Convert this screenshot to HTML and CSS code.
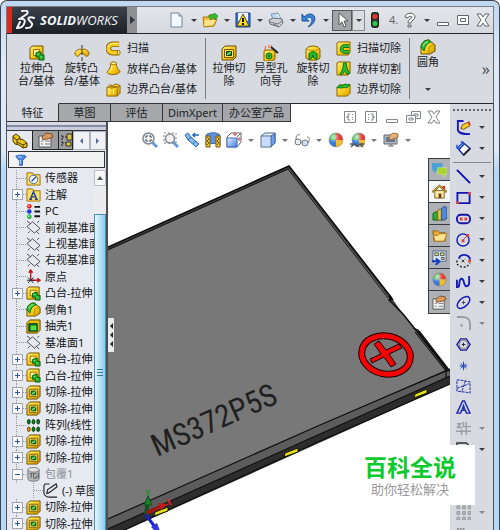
FILE: index.html
```html
<!DOCTYPE html>
<html lang="zh-CN">
<head>
<meta charset="utf-8">
<title>SolidWorks</title>
<meta name="viewport" content="width=device-width, initial-scale=1">
<link rel="stylesheet" href="styles.css">
</head>
<body>
<svg class="defs" aria-hidden="true">
  <defs>
    <linearGradient id="gold" x1="0" y1="0" x2="1" y2="1"><stop offset="0" stop-color="#fff07a"/><stop offset=".5" stop-color="#f8cd1c"/><stop offset="1" stop-color="#d39a00"/></linearGradient>
    <linearGradient id="sky" x1="0" y1="0" x2="1" y2="1"><stop offset="0" stop-color="#e9f3ff"/><stop offset="1" stop-color="#3d7be0"/></linearGradient>
    <radialGradient id="shine" cx=".35" cy=".3" r=".7"><stop offset="0" stop-color="#fff" stop-opacity=".7"/><stop offset=".6" stop-color="#fff" stop-opacity="0"/></radialGradient>
    <symbol id="boss" viewBox="0 0 16 16"><path d="M1 3 3 1h11v10l-2 3H1z" fill="url(#gold)" stroke="#7b5200"/><path d="M4.500 4.500h6v6h-6z" fill="#fff2a0" stroke="#9b7000"/><path d="M7 8l2-1h3v3h3v5h-5v-3H7z" fill="#23b52a" stroke="#075c12"/><path d="M8 9h2M11 12h2" fill="none" stroke="#7be06f"/></symbol>
    <symbol id="cut" viewBox="0 0 16 16"><path d="M1 4 4 1h11v11l-3 3H1z" fill="url(#gold)" stroke="#6c4a00"/><path d="M3.500 4.500h9v8h-9z" fill="#ffe45c" stroke="#7b5800"/><path d="M5.500 6.500h5v4h-5z" fill="#1aa52b" stroke="#073f0e"/><path d="M6 10l4-3" stroke="#bdf6b0"/></symbol>
    <symbol id="revolve" viewBox="0 0 16 16"><path d="M8 0v3M8 12v4" stroke="#333"/><path d="M1 9c0-4 4-5 7-5s7 1 7 5c-1 3-4 3-5 0-1-1-3-1-4 0-1 3-4 3-5 0z" fill="url(#gold)" stroke="#8e6200"/><path d="M8 4v6" stroke="#333"/></symbol>
    <symbol id="sweep" viewBox="0 0 16 16"><path d="M14 3.500H7a4.500 4.500 0 0 0 0 9h6" fill="none" stroke="#8e6200" stroke-width="6"/><path d="M14 3.500H7a4.500 4.500 0 0 0 0 9h6" fill="none" stroke="#f7ce25" stroke-width="4"/><path d="M13 2.500H7a5 5 0 0 0-5 4" fill="none" stroke="#fff18c"/><ellipse cx="13.500" cy="12.500" rx="1.500" ry="2.500" fill="#fff08a" stroke="#8e6200"/></symbol>
    <symbol id="loft" viewBox="0 0 16 16"><path d="M5 2c1-1 5-1 6 0 0 4 1 6 4 9-1 4-12 5-14 1 3-3 4-6 4-10z" fill="url(#gold)" stroke="#8e6200"/><ellipse cx="8" cy="2.500" rx="3" ry="1.500" fill="#fff3a0" stroke="#a47800"/><path d="M6 5c0 4-1 6-3 7" stroke="#fff39c" fill="none"/></symbol>
    <symbol id="boundary" viewBox="0 0 16 16"><path d="M1 6l3-3 3 1 3-2 3 1 2 1v8l-3 3H1z" fill="url(#gold)" stroke="#8e6200"/><path d="M1 6c3-2 4 2 7 0s3 1 4 0l3-2M12 7v8M4 5l8 0" fill="none" stroke="#8e6200"/><path d="M3 8v5M8 8v5" stroke="#fff18e"/></symbol>
    <symbol id="hole" viewBox="0 0 16 16"><path d="M1 6l2-1h9v9l-2 2H1z" fill="url(#gold)" stroke="#8e6200"/><circle cx="6" cy="11" r="3" fill="#39c737" stroke="#086f10"/><circle cx="6" cy="11" r="1" fill="#064d0d"/><path d="M8 2l7 6" stroke="#222" stroke-width="2"/><path d="M2 1l1 2M6 0v3M9 0 8 2M3 4H1" stroke="#ed5b17"/></symbol>
    <symbol id="revcut" viewBox="0 0 16 16"><path d="M1 4c3-4 11-4 14 0v9c-2 3-12 3-14 0z" fill="url(#gold)" stroke="#8e6200"/><path d="M2 4c3 2 9 2 12 0" fill="none" stroke="#c08f00"/><path d="M4 15V9c1-3 7-3 8 0v6l-3-2-1-3-1 3z" fill="#25b832" stroke="#087512"/></symbol>
    <symbol id="sweepcut" viewBox="0 0 16 16"><path d="M1 2 3 1h12v11l-2 3H1z" fill="url(#gold)" stroke="#8e6200"/><path d="M14 5.500H9a3 3 0 0 0 0 6h5" fill="none" stroke="#0c7418" stroke-width="4"/><path d="M14 5.500H9a3 3 0 0 0 0 6h5" fill="none" stroke="#2fc03a" stroke-width="2"/></symbol>
    <symbol id="loftcut" viewBox="0 0 16 16"><path d="M1 2 3 1h12v11l-2 3H1z" fill="url(#gold)" stroke="#8e6200"/><path d="M8 2h3c0 5 1 8 4 11l-3 1-3-3-3 4-2-1c3-4 4-7 4-12z" fill="#26b935" stroke="#087512"/></symbol>
    <symbol id="boundarycut" viewBox="0 0 16 16"><path d="M1 6l3-3h11v9l-3 3H1z" fill="url(#gold)" stroke="#8e6200"/><path d="M1 6l3-3 3 1 3-2 2 1h3l-3 3c-2 1-2-1-4 0s-4 0-7 0z" fill="#28ba35" stroke="#087512"/></symbol>
    <symbol id="fillet" viewBox="0 0 16 16"><path d="M1 7c1-4 4-6 8-6l6 5v6l-5 3H1z" fill="url(#gold)" stroke="#6d5000"/><path d="M1 8c1-5 4-7 8-7l2 2c-4 1-6 4-7 9z" fill="#2cc138" stroke="#096f13"/><path d="M9 8v7M9 8l6-3" fill="none" stroke="#b98a00"/><path d="M3 7c1-2 2-4 5-4" stroke="#b0f5a2" fill="none"/></symbol>
    <symbol id="shell" viewBox="0 0 16 16"><path d="M1 4 4 1h11v11l-3 3H1z" fill="#e9bd10" stroke="#574100"/><path d="M3 5h9v8H3z" fill="#08761a" stroke="#073b0d"/><path d="M5 7h6v5H5z" fill="#53e04b"/></symbol>
    <symbol id="plane" viewBox="0 0 16 16"><path d="M1 7l6-5 8 7-6 5zM1 1l4 3M11 12l3 3" fill="none" stroke="#474a50"/><path d="M4 12l-2 2M12 3l2-2" stroke="#474a50"/></symbol>
    <symbol id="origin" viewBox="0 0 16 16"><path d="M5 12V2M3 4l2-3 2 3M6 12h8M12 10l3 2-3 2" fill="none" stroke="#c6171c" stroke-width="1.500"/><path d="M2 9l6 6M2 15l6-6M1 12h8" stroke="#222"/></symbol>
    <symbol id="pattern" viewBox="0 0 16 16"><g fill="#0e7c20" stroke="#063e10"><ellipse cx="3" cy="4" rx="1.500" ry="2.500"/><ellipse cx="8" cy="4" rx="1.500" ry="2.500"/><ellipse cx="13" cy="4" rx="1.500" ry="2.500"/><ellipse cx="8" cy="12" rx="1.500" ry="2.500"/><ellipse cx="13" cy="12" rx="1.500" ry="2.500"/></g><ellipse cx="3" cy="12" rx="1.500" ry="2.500" fill="#ed8e00" stroke="#794100"/></symbol>
    <symbol id="sensor" viewBox="0 0 16 16"><path d="M1 4V2h6l1 2h7v11H1z" fill="#ffdf62" stroke="#a36d00"/><circle cx="8" cy="9" r="4.500" fill="#edf5ff" stroke="#426aa0"/><path d="M6 11l5-5" stroke="#234b97" stroke-width="1.500"/></symbol>
    <symbol id="note" viewBox="0 0 16 16"><path d="M1 4V2h6l1 2h7v11H1z" fill="#ffdf62" stroke="#a36d00"/><path d="M4.500 13 8 5l3.500 8M6 10.500h4M3.500 13h3M9.500 13h3" fill="none" stroke="#1444a5" stroke-width="1.500"/></symbol>
    <symbol id="material" viewBox="0 0 16 16"><circle cx="3.500" cy="2.500" r="2.500" fill="#ed1b1b"/><circle cx="3.500" cy="8" r="2.500" fill="#1c36df"/><circle cx="3.500" cy="13.500" r="2.500" fill="#13bd2b"/><circle cx="3" cy="2" r="1" fill="#ffb5b5"/><circle cx="3" cy="13" r="1" fill="#b0ffb5"/><path d="M9 3h6M9 8h6M9 13h6" stroke="#161616" stroke-width="2"/></symbol>
    <symbol id="wrap" viewBox="0 0 16 16"><path d="M2 3v10c2 3 10 3 12 0V3" fill="#b8babd" stroke="#747679"/><ellipse cx="8" cy="3" rx="6" ry="2.500" fill="#dfe0e2" stroke="#77797b"/><path d="M4 7h3M5.500 7v5M11 7H8v5h3V9M13 6v6" fill="none" stroke="#56585a"/></symbol>
    <symbol id="sketch" viewBox="0 0 16 16"><path d="M7 1H2L1 3v8c1 3 3 4 6 4h8M4 11l1-4 9-6 1 3-8 6z" fill="none" stroke="#222" stroke-width="1.200"/></symbol>
    <symbol id="ball" viewBox="0 0 16 16"><path d="M8 8V1a7 7 0 0 0-7 7z" fill="#3bb948"/><path d="M8 8h7a7 7 0 0 0-7-7z" fill="#e33a35"/><path d="M8 8v7a7 7 0 0 0 7-7z" fill="#f0bb2c"/><path d="M8 8H1a7 7 0 0 0 7 7z" fill="#3578df"/><circle cx="8" cy="8" r="7" fill="url(#shine)" stroke="#777" stroke-width=".5"/></symbol>
    <symbol id="props" viewBox="0 0 16 16"><path d="M1 4h12v11H1z" fill="#f3f3f3" stroke="#555"/><path d="M3 9h2M7 9h5M3 12h2M7 12h5" stroke="#777"/><path d="M4 5l4-4 6 1 1 3-5 2H8L5 8z" fill="#d89860" stroke="#805025"/></symbol>
    <symbol id="screen" viewBox="0 0 16 16"><path d="M1 3h13v9H1zM5 14h6M8 12v2" fill="#acbdc9" stroke="#666"/><path d="M3 5h9v5H3z" fill="#697883"/><path d="M6 4l4-3 5 1v3l-5 2-3 1z" fill="#e5b080" stroke="#a87345"/></symbol>
    <symbol id="close" viewBox="0 0 16 16"><path d="M2 2h4l2 3 2-3h4l-4 6 4 6h-4l-2-3-2 3H2l4-6z" fill="#fff" stroke="currentColor"/></symbol>
    <symbol id="min" viewBox="0 0 16 16"><path d="M2.500 10.500h11v3h-11z" fill="#fff" stroke="currentColor"/></symbol>
    <symbol id="max" viewBox="0 0 16 16"><path d="M2.500 3.500h11v9h-11zM5.500 6.500h5v3h-5z" fill="#fff" stroke="currentColor"/></symbol>
  </defs>
</svg>

<div class="window">
  <header class="titlebar">
    <div class="brand">
      <svg class="ds" viewBox="0 0 20 20" aria-hidden="true"><path d="M6 1c4-1 7 0 5 3L5 8M3 9c5-1 7 1 5 5-1 3-4 4-7 4l3-6M18 8c-4-2-7 0-5 2 2 3 4 3 3 5-1 3-3 3-6 3" fill="none" stroke="#f3f5f6" stroke-width="2" stroke-linecap="round"/></svg>
      <span class="brand-name"><b>SOLID</b>WORKS</span>
    </div>
    <button class="brand-more" aria-label="菜单"></button>
    <nav class="quick" aria-label="标准工具栏">
      <button class="tool" aria-label="新建"><svg viewBox="0 0 16 16"><path d="M2 1h8l3 3v11H2z" fill="#f2f8ff" stroke="#74879a"/><path d="M10 1v3h3" fill="#bdd0df" stroke="#74879a"/></svg></button><button class="caret" aria-label="新建选项"></button>
      <button class="tool" aria-label="打开"><svg viewBox="0 0 16 16"><path d="M1 5h5l1-2h4v4h4l-3 7-10 1z" fill="#f4ba3c" stroke="#a97814"/><path d="M3 8h11l-3 5-9 1z" fill="#ffe28a"/><path d="M7 5c1-3 3-3 5-2V1l4 3-3 4V6c-3-1-3 0-4 2z" fill="#2fc32e" stroke="#15801b" stroke-width=".7"/></svg></button><button class="caret" aria-label="打开选项"></button>
      <button class="tool" aria-label="保存"><svg viewBox="0 0 16 16"><path d="M1 1h14v14H1z" fill="#3472cf" stroke="#173f81"/><path d="M3 1h10v8H3z" fill="#eef5fe"/><path d="M8 2l6 12H2z" fill="#ffda23" stroke="#5f4c08"/><path d="M8 6v4M8 11v2" stroke="#111" stroke-width="2"/></svg></button><button class="caret" aria-label="保存选项"></button>
      <button class="tool" aria-label="打印"><svg viewBox="0 0 16 16"><path d="M5 7 3 2l7-1 3 6z" fill="#eef7ff" stroke="#719abc"/><path d="M1 8l4-2 9 1 1 4-4 4-9-3z" fill="#cdd0d4" stroke="#6c7075"/><path d="M2 10l8 2 4-3M5 12l5 2" fill="none" stroke="#74777b"/><path d="M4 3h5M5 5h5" stroke="#8fb9dc"/></svg></button><button class="caret" aria-label="打印选项"></button>
      <button class="tool" aria-label="撤消"><svg viewBox="0 0 16 16"><path d="M1 2v7h7L5 7c3-3 6-2 6 1 0 2-1 4-4 7 8-3 9-12 3-13-3 0-5 1-7 3z" fill="#3a86da" stroke="#1c4e96"/></svg></button><button class="caret" aria-label="撤消选项"></button>
      <button class="tool pressed" aria-label="选择"><svg viewBox="0 0 16 16"><path d="M5 1v12l3-3 2 5 2-1-2-5h4z" fill="#fff" stroke="#555"/></svg></button><button class="caret boxed" aria-label="选择选项"></button>
      <button class="tool" aria-label="重建模型"><svg viewBox="0 0 16 16"><rect x="4.500" y=".500" width="7" height="15" rx="2" fill="#303530" stroke="#1e221e"/><circle cx="8" cy="4.500" r="2.500" fill="#f0332b"/><circle cx="8" cy="11.500" r="2.500" fill="#21cf38"/></svg></button>
      <span class="count">4.</span>
      <button class="tool" aria-label="帮助"><svg viewBox="0 0 16 16"><path d="M3 5c0-5 10-5 10 0 0 3-4 3-4 6H6c0-4 4-4 4-6 0-1-4-1-4 1zM6 13h3v2H6z" fill="#fff" stroke="#5c6065"/></svg></button><button class="caret" aria-label="帮助选项"></button>
      <button class="tool" aria-label="最小化"><svg viewBox="0 0 16 16"><use href="#min"/></svg></button>
      <button class="tool" aria-label="最大化"><svg viewBox="0 0 16 16"><use href="#max"/></svg></button>
      <button class="tool" aria-label="关闭"><svg viewBox="0 0 16 16"><use href="#close"/></svg></button>
    </nav>
  </header>

  <section class="ribbon" aria-label="特征工具">
    <div class="group wide">
      <button class="big"><svg><use href="#boss"/></svg><span>拉伸凸<br>台/基体</span></button>
      <button class="big"><svg><use href="#revolve"/></svg><span>旋转凸<br>台/基体</span></button>
      <div class="stack">
        <button class="small"><svg><use href="#sweep"/></svg>扫描</button>
        <button class="small"><svg><use href="#loft"/></svg>放样凸台/基体</button>
        <button class="small"><svg><use href="#boundary"/></svg>边界凸台/基体</button>
      </div>
    </div>
    <div class="group">
      <button class="big"><svg><use href="#cut"/></svg><span>拉伸切<br>除</span></button>
      <button class="big"><svg><use href="#hole"/></svg><span>异型孔<br>向导</span></button>
      <button class="big"><svg><use href="#revcut"/></svg><span>旋转切<br>除</span></button>
      <div class="stack">
        <button class="small"><svg><use href="#sweepcut"/></svg>扫描切除</button>
        <button class="small"><svg><use href="#loftcut"/></svg>放样切割</button>
        <button class="small"><svg><use href="#boundarycut"/></svg>边界切除</button>
      </div>
    </div>
    <div class="group last">
      <button class="big"><svg><use href="#fillet"/></svg><span>圆角</span><i class="tri"></i></button>
    </div>
    <button class="overflow" aria-label="更多">»</button>
  </section>

  <main class="workspace">
    <div class="tabrow">
      <nav class="tabs" aria-label="命令管理器">
        <button class="tab active">特征</button><button class="tab">草图</button><button class="tab">评估</button><button class="tab long">DimXpert</button><button class="tab longer">办公室产品</button>
      </nav>
      <div class="doc-controls">
        <button aria-label="左侧窗格"><svg viewBox="0 0 16 16"><path d="M2.500 2.500h11v11h-11zM8 5H6v6h2M10.500 5v1M10.500 8v1M10.500 10v1M4 8h3" fill="none" stroke="currentColor"/></svg></button>
        <button aria-label="右侧窗格"><svg viewBox="0 0 16 16"><path d="M2.500 2.500h11v11h-11zM8 5h2v6H8M5.500 5v1M5.500 8v1M5.500 10v1M9 8h3" fill="none" stroke="currentColor"/></svg></button>
        <button aria-label="最小化文档"><svg viewBox="0 0 16 16"><use href="#min"/></svg></button>
        <button aria-label="还原文档"><svg viewBox="0 0 16 16"><path d="M6.500 2.500h9v7h-9zM9 5h4v2H9z" fill="#fff" stroke="currentColor"/><path d="M1.500 6.500h9v7h-9zM4 9h4v2H4z" fill="#fff" stroke="currentColor"/></svg></button>
        <button aria-label="关闭文档"><svg viewBox="0 0 16 16"><use href="#close"/></svg></button>
      </div>
    </div>

    <aside class="manager">
      <div class="splitter"></div>
      <div class="manager-tabs">
        <button class="mtab active" aria-label="设计树"><svg viewBox="0 0 16 16"><path d="M1 3l3-2 4 3v3l2-1 5 4v4l-4 1-4-3-4-1-2-3z" fill="#efc51b" stroke="#4a3800"/><path d="M1 4l4 3v4M5 7l3-2M5 9l6 3 4-2M11 12v3" fill="none" stroke="#4a3800"/></svg></button>
        <button class="mtab" aria-label="属性"><svg><use href="#props"/></svg></button>
        <button class="mtab cut" aria-label="配置"><svg viewBox="0 0 16 16"><path d="M4 3v12M4 5h5M4 11h4" fill="none" stroke="#222" stroke-dasharray="2 1"/><path d="M9 2h5v6H9zM8 10h5v4H8z" fill="#dec034" stroke="#333"/></svg></button>
        <button class="step prev" aria-label="上一个"></button>
        <button class="step next" aria-label="下一个"></button>
      </div>
      <label class="filter"><svg viewBox="0 0 16 16" aria-hidden="true"><path d="M1 3c2-2 12-2 14 0l-5 6v6H6V9z" fill="#4686ed" stroke="#154aac"/><path d="M4 4h5M7 8v5" stroke="#c9e3ff" stroke-width="1.500"/></svg><input type="text" aria-label="过滤设计树"></label>
      <div class="tree-area">
        <ul class="tree">
          <li><i></i><svg><use href="#sensor"/></svg>传感器</li>
          <li><i class="plus"></i><svg><use href="#note"/></svg>注解</li>
          <li><i></i><svg><use href="#material"/></svg>PC</li>
          <li><i></i><svg><use href="#plane"/></svg>前视基准面</li>
          <li><i></i><svg><use href="#plane"/></svg>上视基准面</li>
          <li><i></i><svg><use href="#plane"/></svg>右视基准面</li>
          <li><i></i><svg><use href="#origin"/></svg>原点</li>
          <li><i class="plus"></i><svg><use href="#boss"/></svg>凸台-拉伸</li>
          <li><i></i><svg><use href="#fillet"/></svg>倒角1</li>
          <li><i></i><svg><use href="#shell"/></svg>抽壳1</li>
          <li><i></i><svg><use href="#plane"/></svg>基准面1</li>
          <li><i class="plus"></i><svg><use href="#boss"/></svg>凸台-拉伸</li>
          <li><i class="plus"></i><svg><use href="#boss"/></svg>凸台-拉伸</li>
          <li><i class="plus"></i><svg><use href="#cut"/></svg>切除-拉伸</li>
          <li><i class="plus"></i><svg><use href="#cut"/></svg>切除-拉伸</li>
          <li><i></i><svg><use href="#pattern"/></svg>阵列(线性</li>
          <li><i class="plus"></i><svg><use href="#cut"/></svg>切除-拉伸</li>
          <li><i class="plus"></i><svg><use href="#cut"/></svg>切除-拉伸</li>
          <li class="muted"><i class="plus minus"></i><svg><use href="#wrap"/></svg>包覆1</li>
          <li class="child"><i></i><svg><use href="#sketch"/></svg>(-) 草图</li>
          <li><i class="plus"></i><svg><use href="#cut"/></svg>切除-拉伸</li>
          <li><i class="plus"></i><svg><use href="#cut"/></svg>切除-拉伸</li>
        </ul>
        <div class="scroll" aria-hidden="true"><div class="scroll-up"></div><div class="thumb"></div></div>
      </div>
    </aside>

    <section class="viewport" aria-label="模型视图">
      <svg class="model" viewBox="108 122 342 408" preserveAspectRatio="xMinYMin slice">
        <path d="M108 247 289 166 391 297 403 314 416 330 420 331 450 370V384L126 530H108z" fill="#2d2d2d"/>
        <path d="M108 250 289 169 391 300 403 314 446 370 320 425 108 519z" fill="#787878"/>
        <path d="M450 370 320 425 108 519V529L320 434 450 376z" fill="#5c5c5c"/>
        <path d="M108 247 289 166 391 297 389 300 403 314 447 369" fill="none" stroke="#0c0c0c" stroke-width="1.500"/>
        <path d="M108 250 288 169 388 298" fill="none" stroke="#151515"/>
        <path d="M108 248.500 289 167.500 390 298" fill="none" stroke="#424242" stroke-width=".7"/>
        <path d="M413 328 418 330 450 372M415 332 447 372M450 369 320 425 108 519M450 376 320 434 108 529M450 384 320 441 124 530M446 369v9" fill="none" stroke="#111" stroke-width="1.200"/>
        <path d="M389 296l3 3-2 1" stroke="#050505" stroke-width="2" fill="none"/>
        <g fill="#e3df19" stroke="#151500"><path d="M415 394 427 389V393L414 398z"/><path d="M285 453 298 448V452L284 457z"/><path d="M155 512 168 507V511L154 516z"/></g>
        <g transform="rotate(12 386 355)" fill="none"><ellipse cx="386" cy="355" rx="24.500" ry="19" stroke="#180000" stroke-width="7"/><ellipse cx="386" cy="355" rx="24.500" ry="19" stroke="#f20505" stroke-width="5"/></g>
        <path d="M374 344l5-3 7 9 13-6 3 4-13 6 7 10-5 3-7-10-12 6-2-4 11-5z" fill="#f20505" stroke="#210000"/>
        <text class="engraving" transform="translate(157 457) rotate(-24)">MS372P5S</text>
        <path d="M146 514 148 501" stroke="#174f1e" stroke-width="4"/><path d="M144 505l4-9 4 9z" fill="#168326" stroke="#0c4e15"/>
        <path d="M147 513 160 507" stroke="#a01717" stroke-width="4"/><path d="M158 503l10 1-7 6z" fill="#bd1c1c"/>
        <path d="M146 515l9 12" stroke="#1820ce" stroke-width="3"/><path d="M151 527l6-4 3 8h-5z" fill="#3036dc"/>
        <text class="axis y-axis" x="145" y="496">Y</text><text class="axis x-axis" x="166" y="505">X</text>
      </svg>
      <div class="view-tools">
        <button aria-label="整屏显示全图"><svg viewBox="0 0 16 16"><path d="M10 10l5 5" stroke="#659dda" stroke-width="3"/><circle cx="6.500" cy="6.500" r="5.500" fill="#eef2f6" stroke="#858b92" stroke-width="1.500"/><path d="M4 6V4h2M7 4h2v2M9 7v2H7M6 9H4V7" fill="none" stroke="#454b52"/></svg></button>
        <button aria-label="局部放大"><svg viewBox="0 0 16 16"><path d="M10 10l5 5" stroke="#659dda" stroke-width="3"/><circle cx="7" cy="6.500" r="4.500" fill="#eef2f6" stroke="#858b92" stroke-width="1.500"/><path d="M1 1h12v10H1z" fill="none" stroke="#7e858b" stroke-dasharray="2 2"/></svg></button>
        <button aria-label="上一视图"><svg viewBox="0 0 16 16"><path d="M1 3l3-2 3 4 8 7-3 3-8-7z" fill="#83b8ef" stroke="#356eae"/><path d="M4 8l3-3M9 12l3-3" stroke="#356eae"/><path d="M15 3H9M11 1 9 3l2 2" fill="none" stroke="#2268b7" stroke-width="1.500"/></svg></button>
        <button aria-label="剖面视图"><svg viewBox="0 0 16 16"><path d="M1 3c3-3 11-3 14 0v10c-3-2-11-2-14 0z" fill="#5d91df" stroke="#476b9e"/><path d="M1 4h4v11H1zM11 4h4v11h-4z" fill="#f3c82b" stroke="#705a12"/><path d="M2 5l2 2-2 2 2 2-2 2M12 5l2 2-2 2 2 2-2 2" fill="none" stroke="#705a12"/></svg></button>
        <button aria-label="视图定向"><svg viewBox="0 0 16 16"><path d="M1 5l4-4h10v9l-4 5H1z" fill="#fff" stroke="#666"/><path d="M1 6h10v9H1z" fill="url(#sky)" stroke="#4171b5"/><path d="M11 5l4-4" stroke="#666"/><path d="M9 0v4M7 2h4M13 5v4M11 7h4" stroke="#d05555"/></svg></button><i class="caret"></i>
        <button aria-label="显示样式"><svg viewBox="0 0 16 16"><path d="M1 4l4-3h10v10l-4 4H1z" fill="#eaf2ff" stroke="#47658f"/><path d="M11 4H1M11 4v11l4-4V1z" fill="#6d9eea" stroke="#47658f"/><path d="M2 5h8v9H2z" fill="#c8dbfb"/></svg></button><i class="caret"></i>
        <button aria-label="隐藏项目"><svg viewBox="0 0 16 16"><path d="M2 9c0-6 1-7 4-6M14 11c2-4 2-6-1-6" fill="none" stroke="#777"/><circle cx="4" cy="10" r="3" fill="#e5edf5" stroke="#777"/><circle cx="11" cy="11" r="3" fill="#c7e2fa" stroke="#777"/><path d="M7 10h2" stroke="#777"/></svg></button><i class="caret"></i>
        <button aria-label="编辑外观"><svg><use href="#ball"/></svg></button>
        <button aria-label="应用布景"><svg viewBox="0 0 16 16"><svg x="2" y="0" width="12" height="12"><use href="#ball"/></svg><path d="M1 12h4l3 2 3-2h4M2 15l3-3M14 15l-3-3" fill="none" stroke="#525960" stroke-width="1.500"/></svg></button><i class="caret"></i>
        <button aria-label="视图设定"><svg><use href="#screen"/></svg></button><i class="caret"></i>
      </div>
      <nav class="task-pane" aria-label="任务窗格">
        <button aria-label="论坛"><svg viewBox="0 0 16 16"><path d="M0 1h11v8H5l-3 3V9H0z" fill="#4aa2d5"/><path d="M6 6h10v7h-2v3l-3-3H6z" fill="#a6d629" stroke="#e3efc0" stroke-width=".5"/></svg></button>
        <button class="active" aria-label="资源"><svg viewBox="0 0 16 16"><path d="M11 2h3v5h-3z" fill="#c83228"/><path d="M3 7h10v8H3z" fill="#fff0a4" stroke="#76602b"/><path d="M0 8l8-7 8 7-1 1-7-6-7 6z" fill="#edb925" stroke="#76602b"/><path d="M7 10h3v5H7z" fill="#7a3b17"/></svg></button>
        <button aria-label="设计库"><svg viewBox="0 0 16 16"><path d="M1 8l3-2 3 2v7H1z" fill="#28ac38" stroke="#14651f"/><path d="M6 5l3-2 2 2v10H6z" fill="#efc425" stroke="#796113"/><path d="M10 3l3-3 3 2v11l-3 2h-3z" fill="#4f88df" stroke="#2d4d81"/></svg></button>
        <button aria-label="文件探索器"><svg viewBox="0 0 16 16"><path d="M1 3h5l2 2h6v9H2z" fill="#e6ac35" stroke="#92651b"/><path d="M1 5l2 9h10l3-8H8L6 8H3z" fill="#ffe28d" stroke="#a87722"/></svg></button>
        <button aria-label="视图调色板"><svg viewBox="0 0 16 16"><path d="M1 1h14v11H1z" fill="#e0edf8" stroke="#50647b"/><path d="M3 3h4v3H3zM9 3h4v3H9zM10 8h3v2h-3z" fill="#e8dc5b" stroke="#47546a"/><path d="M0 12h6M4 9l4 3-4 4" fill="none" stroke="#1538c4" stroke-width="2"/></svg></button>
        <button aria-label="外观"><svg><use href="#ball"/></svg></button>
        <button aria-label="自定义属性"><svg><use href="#props"/></svg></button>
      </nav>
      <button class="flyout" aria-label="折叠面板"><i></i><i></i><i></i></button>
    </section>

    <aside class="sketch-bar" aria-label="草图工具">
      <div class="grip"></div>
      <div class="row"><button aria-label="草图绘制"><svg viewBox="0 0 16 16"><path d="M8 1H1M2 1v10c1 3 4 4 13 4" fill="none" stroke="#1717bd" stroke-width="2"/><path d="M5 9l2-4 7-3 1 4-7 4z" fill="#f8ca28" stroke="#715619"/><path d="M13 2l2 3" stroke="#cf3838" stroke-width="2"/></svg></button><i class="caret"></i></div>
      <div class="row"><button aria-label="智能尺寸"><svg viewBox="0 0 16 16"><path d="M3 9l6-6 6 5-7 7z" fill="#f7fbff" stroke="#1e2fae" stroke-width="1.500"/><path d="M15 8l-7 7" stroke="#222" stroke-width="2"/><path d="M1 8 8 1M1 8V4M1 8h4M8 1H5M8 1v3" fill="none" stroke="#2452d4" stroke-width="1.500"/></svg></button><i class="caret"></i></div>
      <hr>
      <div class="row"><button aria-label="直线"><svg viewBox="0 0 16 16"><path d="M1 1l14 14" stroke="#080cbc" stroke-width="2"/></svg></button><i class="caret"></i></div>
      <div class="row"><button aria-label="矩形"><svg viewBox="0 0 16 16"><path d="M1.500 3h13v11h-13z" fill="none" stroke="#1515b2" stroke-width="2"/><path d="M0 12h3v3H0zM13 2h3v3h-3z" fill="#d94747"/></svg></button><i class="caret"></i></div>
      <div class="row"><button aria-label="槽口"><svg viewBox="0 0 16 16"><rect x="1" y="4" width="14" height="9" rx="4" fill="none" stroke="#1717a6" stroke-width="2"/><path d="M4 7h3v3H4zM9 7h3v3H9z" fill="#d44"/></svg></button><i class="caret"></i></div>
      <div class="row"><button aria-label="圆"><svg viewBox="0 0 16 16"><circle cx="7.500" cy="8.500" r="6.500" fill="none" stroke="#171bb5" stroke-width="1.500"/><path d="M7 9l5-5" stroke="#c33"/><path d="M6 8h3v3H6zM11 2h3v3h-3z" fill="#d44"/></svg></button><i class="caret"></i></div>
      <div class="row"><button aria-label="圆弧"><svg viewBox="0 0 16 16"><path d="M3 6c2-6 11-5 12 1" fill="none" stroke="#171bb5" stroke-width="2"/><path d="M1 8v4l5 3h5l4-4" fill="none" stroke="#222" stroke-width="1.500" stroke-dasharray="2 2"/><path d="M6 7l3 3M9 7l-3 3" stroke="#333"/><path d="M13 7h3v3h-3z" fill="#d44"/></svg></button><i class="caret"></i></div>
      <div class="row"><button aria-label="样条曲线"><svg viewBox="0 0 16 16"><path d="M1 6v8h1c3 0 0-9 4-9 3 0 2 8 5 8 4 0 3-4 3-11" fill="none" stroke="#151bb9" stroke-width="2"/></svg></button><i class="caret"></i></div>
      <div class="row"><button aria-label="椭圆"><svg viewBox="0 0 16 16"><ellipse cx="8" cy="8" rx="8" ry="4.500" transform="rotate(-42 8 8)" fill="none" stroke="#171bb5" stroke-width="1.500"/><path d="M6 8h4M8 6v4" stroke="#444"/></svg></button><i class="caret"></i></div>
      <div class="row"><button aria-label="绘制圆角"><svg viewBox="0 0 16 16"><path d="M1 1h6c5 0 8 3 8 7v7" fill="none" stroke="#9b9fa4" stroke-width="2"/><path d="M4 10h4M6 8v4" stroke="#9b9fa4"/></svg></button><i class="caret pale"></i></div>
      <div class="row"><button aria-label="多边形"><svg viewBox="0 0 16 16"><path d="M5 2h6l4 6-4 6H5L1 8z" fill="none" stroke="#171b9c" stroke-width="1.500"/><circle cx="8" cy="8" r="4.500" fill="none" stroke="#777"/><path d="M6 8h4M8 6v4" stroke="#222"/></svg></button></div>
      <div class="row"><button aria-label="点"><svg viewBox="0 0 16 16"><path d="M8 4v9M4 8.500h8M5 6l6 5M11 6l-6 5" stroke="#1b3dba"/></svg></button></div>
      <div class="row"><button aria-label="基准面"><svg viewBox="0 0 16 16"><path d="M1 1h3l11 2v12l-5-1-9-1zM1 10 14 5M10 2 6 14" fill="none" stroke="#1a239f" stroke-dasharray="3 1"/></svg></button></div>
      <div class="row"><button aria-label="文字"><svg viewBox="0 0 16 16"><path d="M1 14 7 1h2l6 13h-4l-1-3H6l-1 3zM7 9h2L8 6z" fill="#c7ceee" stroke="#2029a5" stroke-width="1.500"/></svg></button></div>
      <div class="row"><button aria-label="剪裁实体"><svg viewBox="0 0 16 16"><path d="M0 11h16M8 1v5M11 1v14M6 9v6M8 6h8M1 3h4l-3 4h5M1 7l5-5" fill="none" stroke="#9a9ea4" stroke-width="1.500"/></svg></button><i class="caret pale"></i></div>
      <div class="row"><button aria-label="转换实体"><svg viewBox="0 0 16 16"><path d="M1 15V1h10l4 4" fill="none" stroke="#29332d" stroke-width="1.500"/></svg></button><i class="caret"></i></div>
      <div class="row"></div>
      <div class="row"></div>
      <div class="row"><button aria-label="线性阵列"><svg viewBox="0 0 16 16"><path d="M1 1h3v3H1zM7 1h3v3H7zM13 1h3v3h-3zM1 7h3v3H1zM7 7h3v3H7zM13 7h3v3h-3zM1 13h3v3H1zM7 13h3v3H7zM13 13h3v3h-3z" fill="#bbb" stroke="#94989d"/></svg></button><i class="caret pale"></i></div>
      <div class="row"><button aria-label="移动实体"><svg viewBox="0 0 16 16"><path d="M1 3h8" stroke="#888" stroke-width="2" stroke-dasharray="2 1"/></svg></button></div>
    </aside>
  </main>
  <aside class="watermark"><strong>百科全说</strong><span>助你轻松解决</span></aside>
</div>
</body>
</html>
```
FILE: styles.css
```css
* { box-sizing: border-box; }

body {
  margin: 0;
  background: #fff;
  color: #202226;
  font: 11px/12px "Noto Sans", "Noto Sans CJK SC", sans-serif;
}

button {
  display: flex;
  align-items: center;
  justify-content: center;
  margin: 0;
  padding: 0;
  border: 0;
  background: none;
  color: inherit;
  font: inherit;
}

svg { display: block; flex: none; }
.defs { position: absolute; width: 0; height: 0; }

.window {
  position: relative;
  display: flex;
  flex-direction: column;
  height: 100vh;
  overflow: hidden;
  padding: 5px 5px 0;
  border: solid #3d434e;
  border-width: 1px 1px 0;
  border-radius: 7px 7px 0 0;
  background: linear-gradient(#bfd7ef 0, #dce9f7 60px, #dce9f7 150px, #b5d8f8 170px);
}

/* Title bar */
.titlebar {
  display: flex;
  height: 28px;
  flex: none;
  border: 1px solid #777c85;
  border-bottom: 1px solid #23252a;
  background: linear-gradient(#e4e6eb, #d5d8de);
}
.brand {
  display: flex;
  align-items: center;
  gap: 4px;
  width: 120px;
  padding-left: 4px;
  border-left: 5px solid #dc291e;
  background: linear-gradient(#3b434a, #1b2026);
  color: #f4f5f6;
}
.ds { width: 20px; height: 20px; }
.brand-name { font: italic 13px/16px "Open Sans", sans-serif; }
.brand-more { width: 10px; background: #8e9093; }
.brand-more::after { content: ""; border: solid transparent; border-width: 4px 0 4px 5px; border-left-color: #33363a; }
.quick { display: flex; flex: 1; align-items: center; justify-content: flex-end; color: #62666b; }
.tool { width: 20px; height: 21px; }
.tool svg { width: 16px; height: 16px; }
.caret { display: flex; align-items: center; justify-content: center; width: 13px; height: 21px; }
.caret::after, .tri { content: ""; border: solid transparent; border-width: 3px 3px 0; border-top-color: #3a3d41; }
.pale::after { border-top-color: #85898e; }
.pressed { border: 1px solid #54575b; background: #a2a4a7; }
.boxed { border: 1px solid #888b90; background: #dcdde0; }
.count { width: 15px; padding-left: 4px; }

/* Ribbon */
.ribbon {
  display: flex;
  height: 69px;
  flex: none;
  padding: 4px 3px 4px 7px;
  border: 1px solid #60646a;
  border-width: 0 1px;
  background: #d7dae0;
}
.group { display: flex; margin-right: 2px; padding-right: 8px; border-right: 1px solid #777a80; }
.big { flex-direction: column; justify-content: flex-start; width: 42px; padding-top: 7px; white-space: nowrap; line-height: 13px; }
.wide .big { width: 45px; }
.big svg { width: 16px; height: 16px; }
.stack { display: flex; flex-direction: column; justify-content: space-between; margin-left: 2px; }
.small { justify-content: flex-start; gap: 6px; height: 20px; white-space: nowrap; }
.small svg { width: 15px; height: 15px; }
.last { border: 0; }
.last .big { width: 32px; padding-top: 1px; }
.tri { margin-top: 20px; }
.overflow { margin-left: auto; font-size: 16px; color: #4d5157; }

/* Workspace */
.workspace {
  display: grid;
  flex: 1;
  min-height: 0;
  grid-template: 19px minmax(0, 1fr) / 101px minmax(0, 1fr) 43px;
  border: solid #4c5057;
  border-width: 0 1px;
}
.tabrow { display: flex; grid-column: 1 / 3; justify-content: space-between; border-top: 1px solid #25272b; background: #fff; }
.tabs { display: flex; margin-top: -1px; }
.tab { width: 52px; height: 19px; border: 1px solid #33353a; border-left: 0; background: #a5a7ab; }
.tab.active { border-top-color: #d7dae0; border-bottom-color: #33353a; background: #d7dae0; }
.tab.long { width: 60px; }
.tab.longer { width: 68px; }
.doc-controls { display: flex; height: 16px; margin: 5px 6px 0 0; color: #83868a; }
.doc-controls button { position: relative; z-index: 1; width: 21px; height: 16px; }
.doc-controls svg { width: 16px; height: 16px; }

/* Feature manager */
.manager {
  display: flex;
  flex-direction: column;
  min-height: 0;
  border-right: 2px solid #4a4d52;
  background: #e6e9ef;
}
.splitter { height: 8px; flex: none; border-top: 3px solid #d7dae0; border-bottom: 3px solid #c9cddd; background: #858ba4; }
.manager-tabs { display: flex; height: 20px; flex: none; border-top: 1px solid #333; }
.mtab { width: 26px; overflow: hidden; border-right: 1px solid #222; border-bottom: 1px solid #222; background: #9b9da1; }
.mtab.active { border-bottom: 0; background: #e6e9ef; }
.mtab.cut { width: 14px; }
.mtab svg { width: 16px; height: 16px; }
.step { flex: 1; border: 1px solid #aeb3bd; background: #eff1f5; }
.step::after { content: ""; border: solid transparent; border-width: 3px; }
.prev::after { border-left-width: 0; border-right-color: #5569a0; }
.next::after { border-right-width: 0; border-left-color: #5569a0; }
.filter { display: flex; align-items: center; height: 17px; flex: none; margin: 1px 1px 2px; padding-left: 6px; border: 1px solid #333; background: #f2f2f3; }
.filter svg { width: 12px; height: 12px; }
.filter input { flex: 1; min-width: 0; height: 13px; padding: 0; border: 0; background: none; font: inherit; }
.tree-area { display: flex; flex: 1; min-height: 0; }
.tree {
  display: grid;
  flex: 1;
  min-width: 0;
  grid-auto-rows: minmax(16px, 1fr);
  margin: 0 0 -2px;
  padding: 0 0 0 5px;
  overflow: hidden;
  list-style: none;
}
.tree li { display: flex; align-items: center; min-width: 0; white-space: nowrap; color: #15171a; }
.tree svg { width: 15px; height: 15px; margin-right: 4px; }
.tree i {
  display: flex;
  align-self: stretch;
  align-items: center;
  flex: none;
  width: 14px;
  background:
    repeating-linear-gradient(#999 0 1px, transparent 1px 2px) 4px 0 / 1px 100% no-repeat,
    repeating-linear-gradient(90deg, #999 0 1px, transparent 1px 2px) 5px 50% / 9px 1px no-repeat;
}
.tree .plus::before {
  content: "";
  width: 9px;
  height: 9px;
  border: 1px solid #a3a8b0;
  background:
    linear-gradient(#31539b, #31539b) center / 5px 1px no-repeat,
    linear-gradient(#31539b, #31539b) center / 1px 5px no-repeat,
    #f8f9fb;
}
.tree .minus::before { background: linear-gradient(#31539b, #31539b) center / 5px 1px no-repeat, #f8f9fb; }
.tree .muted { color: #8e9298; }
.tree .child { padding-left: 17px; }
.scroll { display: flex; flex-direction: column; width: 12px; flex: none; background: #ececef; }
.scroll-up { display: flex; align-items: center; justify-content: center; height: 16px; flex: none; border: 1px solid #babdc4; background: #f7f7f8; }
.scroll-up::after { content: ""; border: solid transparent; border-width: 0 3px 4px; border-bottom-color: #555; }
.thumb {
  flex: 1;
  margin-top: 28px;
  border: 1px solid #4c91b4;
  border-bottom: 0;
  background:
    repeating-linear-gradient(#397c9c 0 1px, transparent 1px 3px) center / 6px 8px no-repeat,
    linear-gradient(90deg, #e7f6fe, #8ccded);
}

/* Model view */
.viewport { position: relative; min-width: 0; overflow: hidden; background: #fff; }
.model { position: absolute; inset: 0; width: 100%; height: 100%; }
.engraving { fill: #202020; font: 31px "Roboto Condensed", Roboto, sans-serif; }
.axis { font: bold 8px "Liberation Serif", serif; }
.y-axis { fill: #169126; }
.x-axis { fill: #ed2727; }
.view-tools { position: relative; display: flex; justify-content: center; padding: 8px 5px 0 0; }
.view-tools button { width: 21px; height: 20px; }
.view-tools svg { width: 16px; height: 16px; }
.view-tools .caret { height: 20px; }
.view-tools .caret::after { border-top-color: #777; }
.task-pane { position: absolute; top: 36px; right: 0; width: 22px; border: 1px solid #393b3f; border-width: 1px 0 1px 1px; }
.task-pane button { width: 21px; height: 22px; border-bottom: 1px solid #393b3f; background: #adb0b4; }
.task-pane button:last-child { border-bottom: 0; }
.task-pane .active { background: #f4f5f6; }
.task-pane svg { width: 15px; height: 15px; }
.flyout { position: absolute; top: 195px; left: 0; flex-direction: column; gap: 3px; width: 7px; height: 36px; border: 1px solid #777; border-left: 0; background: #e8eaee; }
.flyout i { border: solid transparent; border-width: 3px 3px 3px 0; border-right-color: #222; }

/* Sketch toolbar */
.sketch-bar { grid-area: 1 / 3 / 3 / 4; overflow: hidden; padding: 5px 2px 0 3px; border-top: 1px solid #25272b; background: #d7dae0; }
.grip { height: 8px; background: repeating-linear-gradient(90deg, #666a70 0 2px, transparent 2px 4px) 0 0 / 100% 2px no-repeat; }
.row { display: flex; height: 21px; align-items: center; }
.row button { width: 21px; height: 21px; }
.row svg { width: 15px; height: 15px; }
.row .caret { width: 18px; }
.sketch-bar hr { height: 1px; margin: 3px 0; border: 0; background: #85898e; }

/* Overlay */
.watermark {
  position: absolute;
  right: 24px;
  bottom: 25px;
  display: flex;
  flex-direction: column;
  align-items: center;
  justify-content: center;
  width: 130px;
  height: 60px;
  background: #fff;
  color: #999;
  font: 13px/18px "Noto Sans CJK SC", sans-serif;
}
.watermark strong { color: #0cc92d; font-size: 23px; line-height: 27px; font-weight: 700; }
```
